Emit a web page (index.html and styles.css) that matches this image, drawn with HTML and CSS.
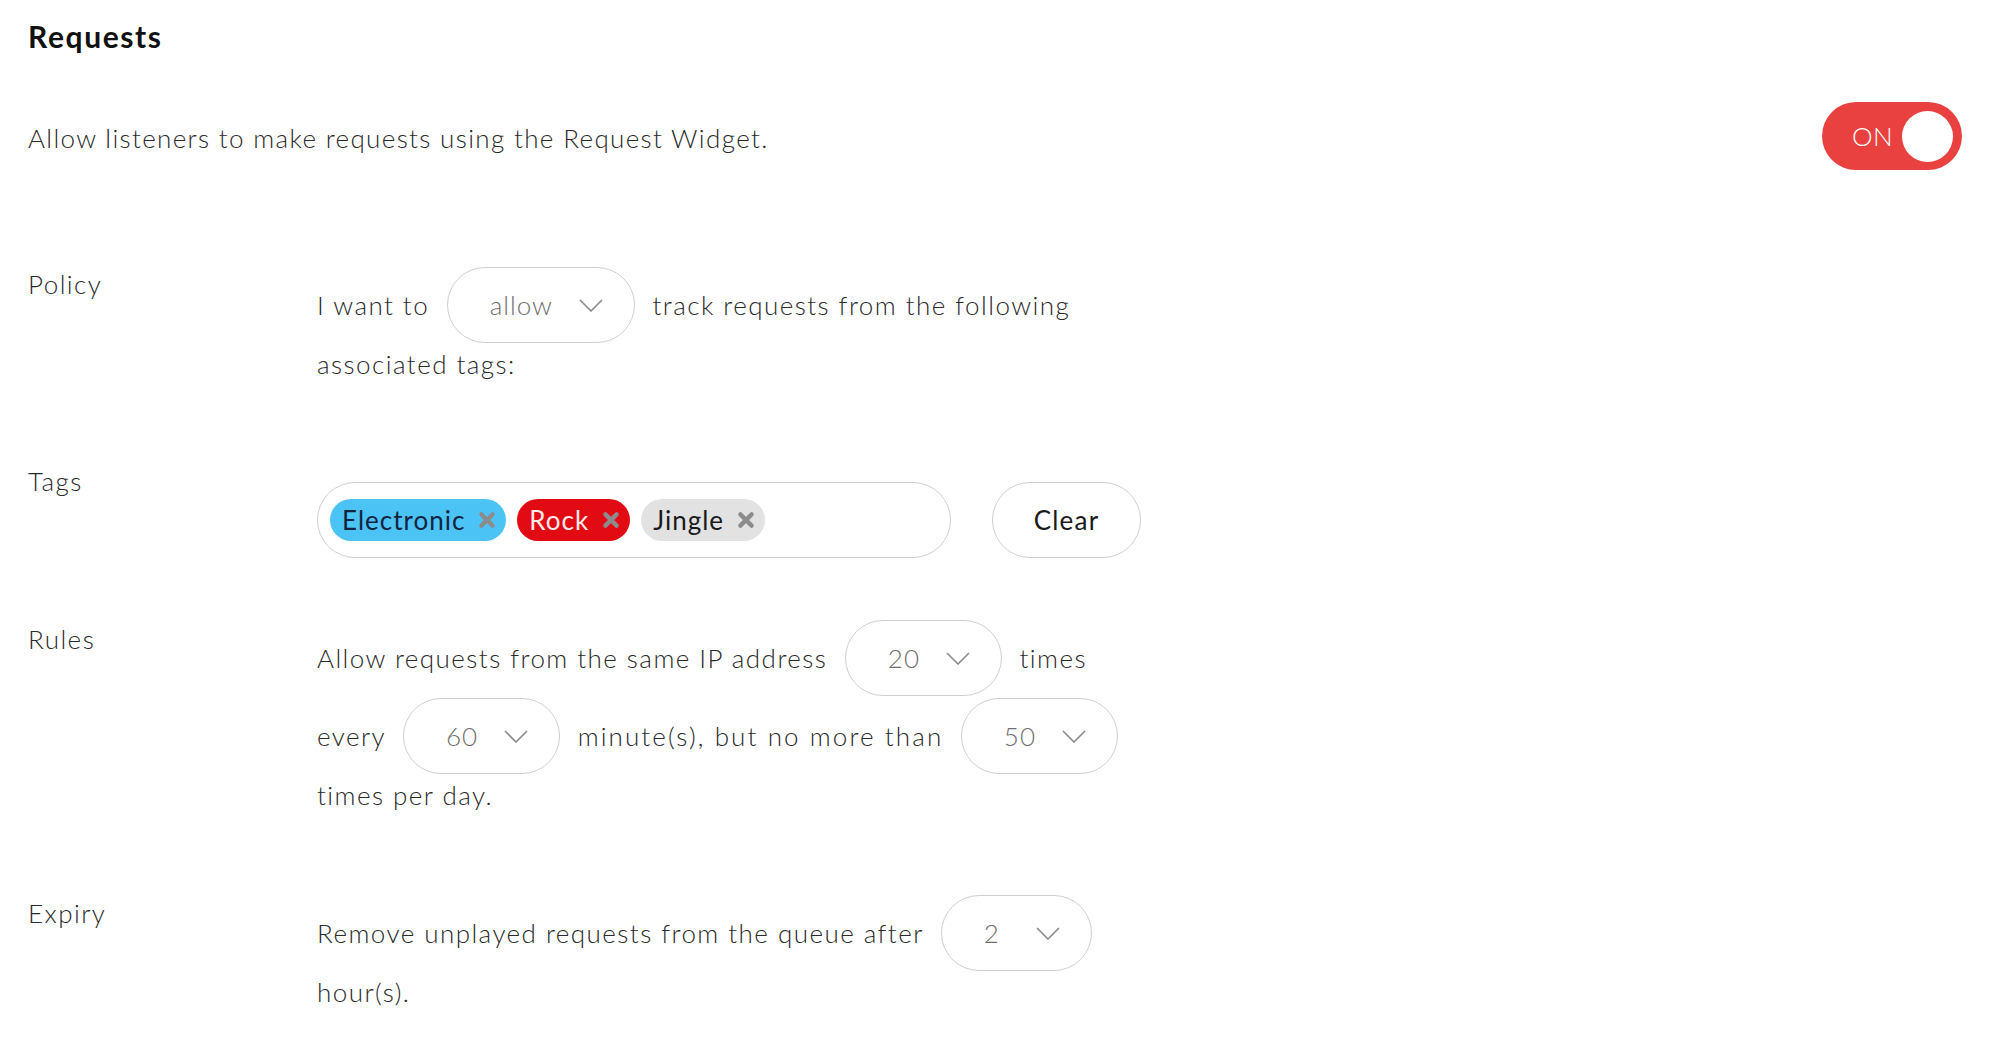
FILE: index.html
```html
<!DOCTYPE html>
<html lang="en">
<head>
<meta charset="utf-8">
<title>Requests</title>
<link rel="stylesheet" href="styles.css">
</head>
<body>
<main class="page">
  <h1 class="title">Requests</h1>

  <div class="intro">
    <p class="intro-text">Allow listeners to make requests using the Request Widget.</p>
    <button class="toggle" type="button" aria-pressed="true">
      <span class="toggle-label">ON</span>
      <span class="toggle-knob"></span>
    </button>
  </div>

  <section class="row row-policy">
    <div class="row-label">Policy</div>
    <div class="row-content">
      I want to
      <span class="select select-wide"><span class="select-value">allow</span><svg class="chevron" viewBox="0 0 24 13"><path d="M1 1 L12 12 L23 1"/></svg></span>
      track requests from the following associated tags:
    </div>
  </section>

  <section class="row row-tags">
    <div class="row-label">Tags</div>
    <div class="row-content tags-line">
      <div class="tag-input">
        <span class="tag tag-blue">Electronic<svg class="tag-x" viewBox="0 0 16 16"><path d="M3 3 L13 13 M13 3 L3 13"/></svg></span>
        <span class="tag tag-red">Rock<svg class="tag-x" viewBox="0 0 16 16"><path d="M3 3 L13 13 M13 3 L3 13"/></svg></span>
        <span class="tag tag-grey">Jingle<svg class="tag-x" viewBox="0 0 16 16"><path d="M3 3 L13 13 M13 3 L3 13"/></svg></span>
      </div>
      <button class="clear-btn" type="button">Clear</button>
    </div>
  </section>

  <section class="row row-rules">
    <div class="row-label">Rules</div>
    <div class="row-content">
      Allow requests from the same IP address
      <span class="select"><span class="select-value">20</span><svg class="chevron" viewBox="0 0 24 13"><path d="M1 1 L12 12 L23 1"/></svg></span>
      times every
      <span class="select"><span class="select-value">60</span><svg class="chevron" viewBox="0 0 24 13"><path d="M1 1 L12 12 L23 1"/></svg></span>
      <span class="spaced">minute(s), but no more than</span>
      <span class="select"><span class="select-value">50</span><svg class="chevron" viewBox="0 0 24 13"><path d="M1 1 L12 12 L23 1"/></svg></span>
      times per day.
    </div>
  </section>

  <section class="row row-expiry">
    <div class="row-label">Expiry</div>
    <div class="row-content">
      Remove unplayed requests from the queue after
      <span class="select"><span class="select-value">2</span><svg class="chevron" viewBox="0 0 24 13"><path d="M1 1 L12 12 L23 1"/></svg></span>
      hour(s).
    </div>
  </section>
</main>
</body>
</html>
```

FILE: styles.css
```css
* { box-sizing: border-box; }

html, body {
  margin: 0;
  padding: 0;
  background: #ffffff;
}

body {
  font-family: "Lato", "Open Sans", "Liberation Sans", sans-serif;
  font-weight: 300;
  color: #2a2a2a;
  letter-spacing: 1.45px;
}

.page {
  padding: 16px 28px 0 28px;
}

.title {
  margin: 0;
  font-size: 30px;
  line-height: 40px;
  font-weight: 700;
  letter-spacing: 1.6px;
  color: #111111;
}

.intro {
  display: flex;
  align-items: center;
  justify-content: space-between;
  margin-top: 46px;
}

.intro-text {
  margin: 3px 0 0 0;
  font-size: 26px;
  line-height: 40px;
  letter-spacing: 1.35px;
}

.toggle {
  display: flex;
  align-items: center;
  width: 140px;
  height: 68px;
  padding: 0 9px 0 30px;
  border: none;
  border-radius: 34px;
  background: #e8413f;
  color: #ffffff;
  font-family: inherit;
  font-weight: 300;
  font-size: 26px;
  letter-spacing: 0.5px;
  cursor: pointer;
}

.toggle-label {
  flex: 1;
  text-align: left;
}

.toggle-knob {
  width: 51px;
  height: 51px;
  border-radius: 50%;
  background: #ffffff;
}

.row {
  display: grid;
  grid-template-columns: 289px 1fr;
  font-size: 26px;
  line-height: 40px;
}

.row-label {
  color: #2a2a2a;
}

.row-content {
  max-width: 820px;
}

.row-policy { margin-top: 94px; }
.row-policy .row-content { padding-top: 2px; }

.row-tags { margin-top: 77px; }
.row-tags .row-content { padding-top: 21px; }

.row-rules { margin-top: 61px; }
.row-rules .row-content { padding-top: 0; }

.row-expiry { margin-top: 78px; }
.row-expiry .row-content { padding-top: 1px; }

.spaced {
  letter-spacing: 2.1px;
}

.select {
  display: inline-flex;
  align-items: center;
  height: 76px;
  margin: 1px 9px;
  padding: 0 31px 0 42px;
  border: 1.5px solid #cfcfcf;
  border-radius: 38px;
  color: #6f6f6f;
  letter-spacing: 1px;
}

.select-value {
  min-width: 26px;
  margin-right: 26px;
}

.chevron {
  width: 24px;
  height: 13px;
  fill: none;
  stroke: #8a8a8a;
  stroke-width: 1.6;
}

.tags-line {
  display: flex;
  align-items: center;
  gap: 41px;
  max-width: none;
}

.tag-input {
  display: flex;
  align-items: center;
  gap: 11px;
  width: 634px;
  height: 76px;
  padding: 0 12px;
  border: 1.5px solid #cfcfcf;
  border-radius: 38px;
}

.tag {
  display: inline-flex;
  align-items: center;
  height: 42px;
  padding: 0 10px 0 12px;
  border-radius: 21px;
  font-size: 26px;
  font-weight: 400;
  letter-spacing: 1px;
}

.tag-x {
  width: 18px;
  height: 18px;
  margin-left: 13px;
  fill: none;
  stroke: #8c8c8c;
  stroke-width: 3.8;
  stroke-linecap: round;
}

.tag-blue { background: #4cc3f5; color: #13233f; }
.tag-red { background: #e30b13; color: #ffe9ea; }
.tag-grey { background: #e2e2e2; color: #1a1a1a; }

.clear-btn {
  width: 149px;
  height: 76px;
  border: 1.5px solid #cfcfcf;
  border-radius: 38px;
  background: #ffffff;
  font-family: inherit;
  font-size: 26px;
  font-weight: 400;
  letter-spacing: 1.2px;
  color: #1a1a1a;
}
```
